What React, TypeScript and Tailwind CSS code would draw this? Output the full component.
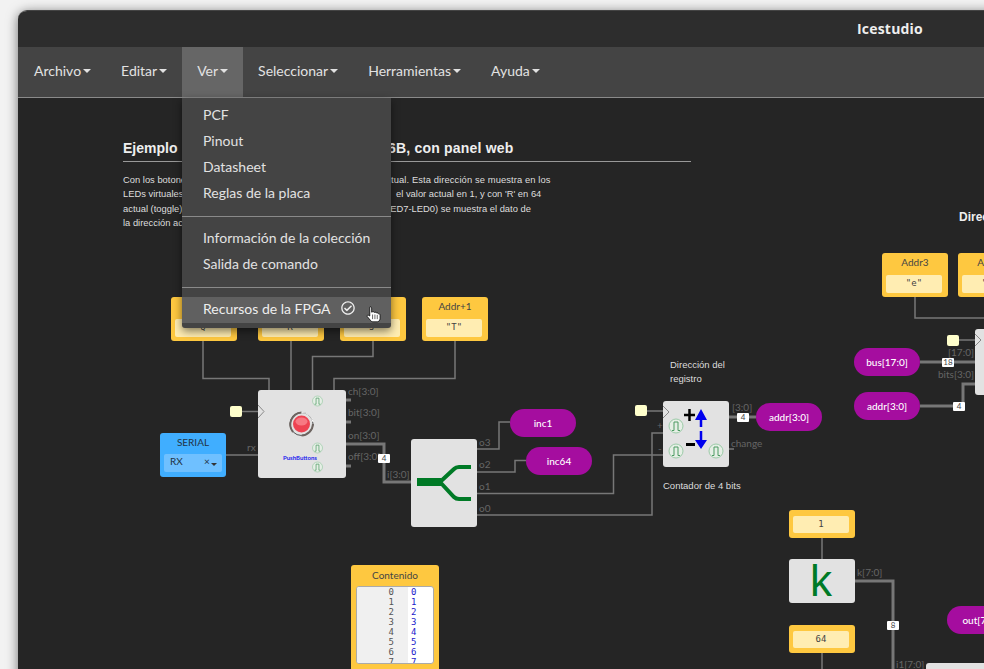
import { FaRegCheckCircle } from "react-icons/fa";

const menus = ["Archivo", "Editar", "Ver", "Seleccionar", "Herramientas", "Ayuda"];

// thin signal wires, in page coordinates
const wires = [
  "M203 341V378.5H269V390",
  "M291 341V390",
  "M373 341V356.5H312.5V390",
  "M455 341V378.5H334V390",
  "M242 411.5H258",
  "M226 455H258",
  "M477 449H499V422H510",
  "M477 472H515V460.5H526",
  "M477 493.5H613.5V455H663",
  "M477 515H652V433H663",
  "M647 411H663",
  "M729 449H734",
  "M915 297V318H984",
  "M959 340H975",
  "M822 538V559",
  "M822 653V669",
];

// buses are drawn thicker
const buses = [
  "M346 444H384V482H411",
  "M729 417H756",
  "M920 362H975",
  "M920 406H963V384H975",
  "M855 581H893V669",
];

function Constant({ name, value, className }: { name: string; value: string; className: string }) {
  return (
    <div className={`absolute w-[66px] h-[44px] rounded-[3px] bg-[#fec840] flex flex-col px-[4px] text-[10px] text-[#444] ${className}`}>
      <div className="h-[22px] text-center leading-[19px] whitespace-nowrap">{name}</div>
      <div className="w-[56px] h-[18px] rounded-[2px] bg-[#ffedb2] text-center text-[9px] leading-[16px] font-['DejaVu_Sans_Mono',monospace]">
        {value}
      </div>
    </div>
  );
}

function SmallConstant({ value, className }: { value: string; className: string }) {
  return (
    <div className={`absolute w-[66px] h-[28px] rounded-[3px] bg-[#fec840] pl-[4px] pr-[6px] pt-[6px] pb-[5px] ${className}`}>
      <div className="h-full rounded-[2px] bg-[#ffedb2] text-center text-[9px] leading-[17px] text-[#444] font-['DejaVu_Sans_Mono',monospace]">
        {value}
      </div>
    </div>
  );
}

function Pill({ label, className }: { label: string; className: string }) {
  return (
    <div className={`absolute w-[66px] h-[28px] rounded-[14px] bg-[#a50d9f] text-white text-[10px] leading-[28px] text-center font-medium whitespace-nowrap ${className}`}>
      {label}
    </div>
  );
}

function Tag({ label, className }: { label: string; className: string }) {
  return <span className={`absolute text-[10px] leading-none text-[#666] whitespace-nowrap ${className}`}>{label}</span>;
}

function Size({ label, className }: { label: string; className: string }) {
  return (
    <span className={`absolute w-[12px] h-[9px] rounded-[1px] bg-white text-[8px] leading-[9px] text-center text-[#444] ${className}`}>
      {label}
    </span>
  );
}

function Clock({ className }: { className: string }) {
  return <div className={`absolute w-[12px] h-[11px] rounded-[2px] bg-[#ffffcc] ${className}`} />;
}

function Pulse({ x, y, r }: { x: number; y: number; r: number }) {
  const s = r / 7;
  return (
    <g transform={`translate(${x} ${y}) scale(${s})`}>
      <circle r="7" fill="#e6efe6" stroke="#9ccba8" strokeWidth="1" />
      <path d="M-4 4.5H-2V-4H2V4.5H4" fill="none" stroke="#4c9a62" strokeWidth="1" />
    </g>
  );
}

function Diagram() {
  const rom = [0, 1, 2, 3, 4, 5, 6, 7];
  return (
    <div className="absolute left-[-18px] top-[-98px] w-[984px] h-[669px] font-['Lato',sans-serif]">
      {/* Notes */}
      <div className="absolute left-[123px] top-[139px] w-[568px] h-[23px] border-b border-[#999] font-['Liberation_Sans',sans-serif] font-bold text-[14px] leading-[18px] text-[#eee]">
        Ejemplo
        <span className="absolute left-[265px] top-0 whitespace-nowrap tracking-[0.2px]">6B, con panel web</span>
      </div>
      <div className="absolute left-[123px] top-[173px] w-[440px] h-[60px] font-['Liberation_Sans',sans-serif] text-[9.4px] leading-[14.3px] text-[#ddd]">
        <div>Con los botones</div>
        <div>LEDs virtuales</div>
        <div>actual (toggle)</div>
        <div>la dirección actual</div>
        <div className="absolute left-[268px] top-0 whitespace-nowrap tracking-[0.1px]">tual. Esta dirección se muestra en los</div>
        <div className="absolute left-[273px] top-[14.3px] whitespace-nowrap">el valor actual en 1, y con 'R' en 64</div>
        <div className="absolute left-[262px] top-[28.6px] whitespace-nowrap">LED7-LED0) se muestra el dato de</div>
      </div>
      <div className="absolute left-[670px] top-[358px] font-['Liberation_Sans',sans-serif] text-[9.5px] leading-[14px] text-[#ddd]">
        Dirección del
        <br />
        registro
      </div>
      <div className="absolute left-[663px] top-[480px] font-['Liberation_Sans',sans-serif] text-[9.5px] leading-[12px] text-[#ddd] whitespace-nowrap">
        Contador de 4 bits
      </div>
      <div className="absolute left-[959px] top-[209px] font-['Liberation_Sans',sans-serif] font-bold text-[12px] leading-[16px] text-[#eee]">
        Direc
      </div>

      {/* Wires */}
      <svg className="absolute inset-0" width="984" height="669" fill="none">
        {wires.map((d) => (
          <path key={d} d={d} stroke="#777" strokeWidth="1.5" />
        ))}
        {buses.map((d) => (
          <path key={d} d={d} stroke="#777" strokeWidth="3" />
        ))}
        <path d="M346 400H351M346 422H351M346 466H351" stroke="#777" strokeWidth="3" />
      </svg>

      {/* Constants */}
      <Constant name="" value={'"Q"'} className="left-[171px] top-[297px]" />
      <Constant name="" value={'"R"'} className="left-[258px] top-[297px]" />
      <Constant name="" value={'"J"'} className="left-[340px] top-[297px]" />
      <Constant name="Addr+1" value={'"T"'} className="left-[422px] top-[297px]" />
      <Constant name="Addr3" value={'"e"'} className="left-[882px] top-[253px]" />
      <Constant name="Addr2" value={'"w"'} className="left-[958px] top-[253px]" />
      <SmallConstant value="1" className="left-[789px] top-[510px]" />
      <SmallConstant value="64" className="left-[789px] top-[625px]" />

      {/* Serial input */}
      <div className="absolute left-[160px] top-[433px] w-[66px] h-[44px] rounded-[3px] bg-[#40aeff] text-[10px] text-[#234]">
        <div className="h-[21px] leading-[19px] text-center">SERIAL</div>
        <div className="relative mx-[4px] h-[18px] rounded-[2px] bg-[#6fc0ff] pl-[6px] leading-[15px]">
          RX
          <span className="absolute left-[40px] top-0">×</span>
          <span className="absolute left-[47px] top-[9px] border-x-[3px] border-t-[3px] border-x-transparent border-t-[#333]" />
        </div>
      </div>

      {/* PushButtons */}
      <div className="absolute left-[258px] top-[390px] w-[88px] h-[88px] rounded-[3px] bg-[#e2e2e2]">
        <svg className="absolute inset-0" width="88" height="88" fill="none">
          <path d="M0 15L6 21.5L0 28" stroke="#888" />
          <circle cx="43.5" cy="34" r="11.5" fill="#e2e2e2" stroke="#555" strokeWidth="1" />
          <path d="M35 42A12 12 0 0 1 43.5 22.5M43.5 45.5A12 12 0 0 0 55 34" stroke="#6d6460" strokeWidth="2" />
          <path d="M43.5 22.5A11.5 11.5 0 0 1 55 32" stroke="#fff" strokeWidth="1" />
          <circle cx="43.5" cy="34" r="8.5" fill="#ee4352" />
          <ellipse cx="43.5" cy="31.5" rx="6" ry="4" fill="#f77983" />
          <Pulse x={59.5} y={11} r={5} />
          <Pulse x={59.5} y={58} r={5} />
          <Pulse x={59.5} y={77} r={5} />
        </svg>
        <span className="absolute left-[25px] top-[64px] text-[6px] leading-[8px] font-bold text-[#2222ee]">PushButtons</span>
      </div>
      <Clock className="left-[230px] top-[406px]" />
      <Tag label="rx" className="left-[247px] top-[442px]" />
      <Tag label="ch[3:0]" className="left-[348px] top-[386px]" />
      <Tag label="bit[3:0]" className="left-[348px] top-[407px]" />
      <Tag label="on[3:0]" className="left-[348px] top-[430px]" />
      <Tag label="off[3:0]" className="left-[348px] top-[451px]" />
      <Size label="4" className="left-[378px] top-[454px]" />
      <Tag label="i[3:0]" className="left-[387px] top-[469px]" />

      {/* Splitter */}
      <div className="absolute left-[411px] top-[439px] w-[66px] h-[88px] rounded-[3px] bg-[#e2e2e2]">
        <svg className="absolute inset-0" width="66" height="88" fill="none">
          <path d="M6 43H30" stroke="#007a26" strokeWidth="8" />
          <path d="M29 43L43 30Q45 28 48 28H60M29 43L43 58Q45 60 48 60H60" stroke="#007a26" strokeWidth="4" />
        </svg>
      </div>
      <Tag label="o3" className="left-[479px] top-[437px]" />
      <Tag label="o2" className="left-[479px] top-[459px]" />
      <Tag label="o1" className="left-[479px] top-[481px]" />
      <Tag label="o0" className="left-[479px] top-[503px]" />
      <Pill label="inc1" className="left-[510px] top-[409px]" />
      <Pill label="inc64" className="left-[526px] top-[447px]" />

      {/* Counter */}
      <div className="absolute left-[663px] top-[401px] w-[66px] h-[66px] rounded-[3px] bg-[#e2e2e2]">
        <svg className="absolute inset-0" width="66" height="66" fill="none">
          <path d="M0 5L6 11L0 17" stroke="#888" />
          <path d="M21 14H32M26.5 8V20" stroke="#000" strokeWidth="2.5" />
          <path d="M23 43.5H32" stroke="#000" strokeWidth="3" />
          <path d="M38 18V26M38 30V40" stroke="#0000ee" strokeWidth="2.5" />
          <path d="M32 19L38 8L44 19ZM32 39L38 48L44 39Z" fill="#0000ee" />
          <Pulse x={13} y={25} r={7} />
          <Pulse x={13} y={50} r={7} />
          <Pulse x={53} y={50} r={7} />
        </svg>
      </div>
      <Clock className="left-[635px] top-[405px]" />
      <Tag label="+" className="left-[657px] top-[420px]" />
      <Tag label="-" className="left-[658px] top-[443px]" />
      <Tag label="[3:0]" className="left-[732px] top-[402px]" />
      <Tag label="change" className="left-[731px] top-[438px]" />
      <Size label="4" className="left-[737px] top-[413px]" />
      <Pill label="addr[3:0]" className="left-[756px] top-[403px]" />

      {/* Right hand register */}
      <div className="absolute left-[975px] top-[329px] w-[66px] h-[66px] rounded-[3px] bg-[#e2e2e2]">
        <svg className="absolute inset-0" width="66" height="66" fill="none">
          <path d="M0 5L6 11L0 17" stroke="#888" />
        </svg>
      </div>
      <Clock className="left-[947px] top-[335px]" />
      <Tag label="[17:0]" className="left-[948px] top-[347px]" />
      <Tag label="bits[3:0]" className="left-[938px] top-[369px]" />
      <Pill label="bus[17:0]" className="left-[854px] top-[348px]" />
      <Pill label="addr[3:0]" className="left-[854px] top-[392px]" />
      <Size label="18" className="left-[942px] top-[358px]" />
      <Size label="4" className="left-[953px] top-[402px]" />

      {/* Memory contents */}
      <div className="absolute left-[351px] top-[565px] w-[88px] h-[110px] rounded-[3px] bg-[#fec840] px-[5px] text-[#444]">
        <div className="h-[21px] text-center text-[10px] leading-[20px]">Contenido</div>
        <div className="flex h-[78px] overflow-hidden rounded-[3px] border border-[#aaa] bg-white font-['DejaVu_Sans_Mono',monospace] text-[9px] leading-[10px]">
          <div className="w-[51px] bg-[#f0f0f0] pr-[14px] text-right text-[#555]">
            {rom.map((n) => (
              <div key={n}>{n}</div>
            ))}
          </div>
          <div className="pl-[3px] text-[#1a1acc]">
            {rom.map((n) => (
              <div key={n}>{n}</div>
            ))}
          </div>
        </div>
      </div>

      {/* k constant */}
      <div className="absolute left-[789px] top-[559px] w-[66px] h-[44px] rounded-[3px] bg-[#e2e2e2] pr-[2px] text-center font-['Liberation_Sans',sans-serif] text-[44px] leading-[44px] text-[#007a26]">
        k
      </div>
      <Tag label="k[7:0]" className="left-[857px] top-[567px]" />
      <Size label="8" className="left-[887px] top-[621px]" />
      <Tag label="i1[7:0]" className="left-[896px] top-[659px]" />
      <Pill label="out[7:0]" className="left-[947px] top-[606px]" />
      <div className="absolute left-[926px] top-[663px] w-[66px] h-[40px] rounded-[3px] bg-[#e2e2e2]" />
    </div>
  );
}

function ViewMenu() {
  return (
    <div className="absolute left-[164px] top-0 w-[209px] h-[230px] bg-[#444] shadow-[0_3px_8px_rgba(0,0,0,0.5)] rounded-b-[3px] text-[14px] leading-[26px] text-[#e2e2e2]">
      <ul className="pt-[4px]">
        <li className="pl-[21px]">PCF</li>
        <li className="pl-[21px]">Pinout</li>
        <li className="pl-[21px]">Datasheet</li>
        <li className="pl-[21px]">Reglas de la placa</li>
      </ul>
      <div className="mt-[10px] mb-[8px] h-px bg-[#8a8a8a]" />
      <ul>
        <li className="pl-[21px]">Información de la colección</li>
        <li className="pl-[21px]">Salida de comando</li>
      </ul>
      <div className="mt-[10px] mb-[9px] h-px bg-[#8a8a8a]" />
      <div className="relative h-[26px] bg-[#606060] pl-[21px] leading-[24px] text-[#eee]">
        Recursos de la FPGA
        <FaRegCheckCircle className="absolute left-[159px] top-[4px] text-[14px] text-[#eee]" />
      </div>
      {/* mouse pointer */}
      <svg className="absolute left-[184px] top-[208px]" width="15" height="17" viewBox="0 0 16 22" preserveAspectRatio="none">
        <path
          d="M4 1.5C5 .8 6 1.3 6 2.5V8L7 7.5C8 7.2 8.6 7.7 9 8.3C10 7.8 10.8 8.2 11.2 9C12.2 8.7 13 9.2 13.3 10C14.2 10 15 10.6 15 12V16C15 18.5 13.5 20.5 12 20.5H7.5C6 20.5 5.2 19.5 4.5 18.2L1.3 13.6C.6 12.6 1.8 11.3 3 12.2L4 13V2.5Z"
          fill="#fff"
          stroke="#000"
          strokeWidth="0.9"
        />
        <path d="M7 11V17M9.5 11V17M12 11.5V17" stroke="#000" strokeWidth="0.7" />
      </svg>
    </div>
  );
}

export default function App() {
  return (
    <div className="w-[984px] h-[669px] overflow-hidden bg-[#f2f2f2] pl-[18px] pt-[10px] font-['Lato',sans-serif]">
      <div className="flex h-[680px] w-[990px] flex-col overflow-hidden rounded-tl-[9px] border-t border-[#444] shadow-[0_2px_12px_rgba(0,0,0,0.55)]">
        <header className="relative h-[36px] shrink-0 bg-[#2d2d2d] text-[14px] font-bold leading-[35px] text-[#eee]">
          <span className="absolute left-[839px] whitespace-nowrap tracking-[0.2px] font-['Open_Sans',sans-serif]">Icestudio</span>
        </header>
        <nav className="flex h-[51px] shrink-0 border-b border-[#8a8a8a] bg-[#444] text-[14px] text-[#e2e2e2]">
          {menus.map((m) => (
            <div key={m} className={`flex items-center px-[15px] pb-[3px] ${m === "Ver" ? "bg-[#666]" : ""} ${m === "Archivo" ? "ml-px" : ""}`}>
              {m}
              <span className="ml-[2px] border-x-[4px] border-t-[4px] border-x-transparent border-t-[#e2e2e2]" />
            </div>
          ))}
        </nav>
        <main className="relative flex-1 bg-[#252525]">
          <Diagram />
          <ViewMenu />
        </main>
      </div>
    </div>
  );
}
